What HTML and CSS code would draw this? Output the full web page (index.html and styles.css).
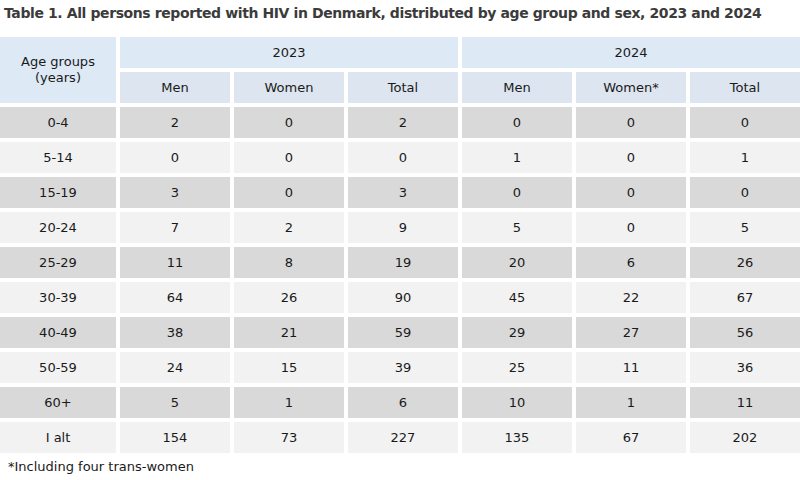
FILE: index.html
```html
<!DOCTYPE html>
<html>
<head>
<meta charset="utf-8">
<link rel="stylesheet" href="styles.css">
</head>
<body>
<h1 class="title">Table 1. All persons reported with HIV in Denmark, distributed by age group and sex, 2023 and 2024</h1>
<div class="table">
  <div class="cell head age">Age groups<br>(years)</div>
  <div class="cell head year">2023</div>
  <div class="cell head year">2024</div>
  <div class="cell sub">Men</div>
  <div class="cell sub">Women</div>
  <div class="cell sub">Total</div>
  <div class="cell sub">Men</div>
  <div class="cell sub">Women*</div>
  <div class="cell sub">Total</div>

  <div class="cell dark">0-4</div><div class="cell dark">2</div><div class="cell dark">0</div><div class="cell dark">2</div><div class="cell dark">0</div><div class="cell dark">0</div><div class="cell dark">0</div>
  <div class="cell light">5-14</div><div class="cell light">0</div><div class="cell light">0</div><div class="cell light">0</div><div class="cell light">1</div><div class="cell light">0</div><div class="cell light">1</div>
  <div class="cell dark">15-19</div><div class="cell dark">3</div><div class="cell dark">0</div><div class="cell dark">3</div><div class="cell dark">0</div><div class="cell dark">0</div><div class="cell dark">0</div>
  <div class="cell light">20-24</div><div class="cell light">7</div><div class="cell light">2</div><div class="cell light">9</div><div class="cell light">5</div><div class="cell light">0</div><div class="cell light">5</div>
  <div class="cell dark">25-29</div><div class="cell dark">11</div><div class="cell dark">8</div><div class="cell dark">19</div><div class="cell dark">20</div><div class="cell dark">6</div><div class="cell dark">26</div>
  <div class="cell light">30-39</div><div class="cell light">64</div><div class="cell light">26</div><div class="cell light">90</div><div class="cell light">45</div><div class="cell light">22</div><div class="cell light">67</div>
  <div class="cell dark">40-49</div><div class="cell dark">38</div><div class="cell dark">21</div><div class="cell dark">59</div><div class="cell dark">29</div><div class="cell dark">27</div><div class="cell dark">56</div>
  <div class="cell light">50-59</div><div class="cell light">24</div><div class="cell light">15</div><div class="cell light">39</div><div class="cell light">25</div><div class="cell light">11</div><div class="cell light">36</div>
  <div class="cell dark">60+</div><div class="cell dark">5</div><div class="cell dark">1</div><div class="cell dark">6</div><div class="cell dark">10</div><div class="cell dark">1</div><div class="cell dark">11</div>
  <div class="cell light">I alt</div><div class="cell light">154</div><div class="cell light">73</div><div class="cell light">227</div><div class="cell light">135</div><div class="cell light">67</div><div class="cell light">202</div>
</div>
<p class="note">*Including four trans-women</p>
</body>
</html>
```

FILE: styles.css
```css
html, body {
  margin: 0;
  padding: 0;
  background: #ffffff;
  font-family: "DejaVu Sans", sans-serif;
  color: #1a1a1a;
}

.title {
  margin: 0;
  padding: 4px 0 0 4px;
  height: 37px;
  box-sizing: border-box;
  font-size: 14px;
  font-weight: bold;
  letter-spacing: -0.4px;
  color: #3b3b3b;
  white-space: nowrap;
  line-height: 18px;
}

.table {
  display: grid;
  grid-template-columns: 116px repeat(6, 110px);
  grid-auto-rows: 31px;
  gap: 4px;
}

.cell {
  display: flex;
  align-items: center;
  justify-content: center;
  font-size: 13px;
  text-align: center;
}

.head {
  background: #dde9f5;
}

.age {
  grid-row: span 2;
  line-height: 16px;
}

.year {
  grid-column: span 3;
}

.sub {
  background: #dce5f0;
}

.dark {
  background: #d9d9d9;
}

.light {
  background: #f2f2f2;
}

.note {
  margin: 0;
  padding: 5px 0 0 8px;
  font-size: 13px;
  line-height: 18px;
}
```
